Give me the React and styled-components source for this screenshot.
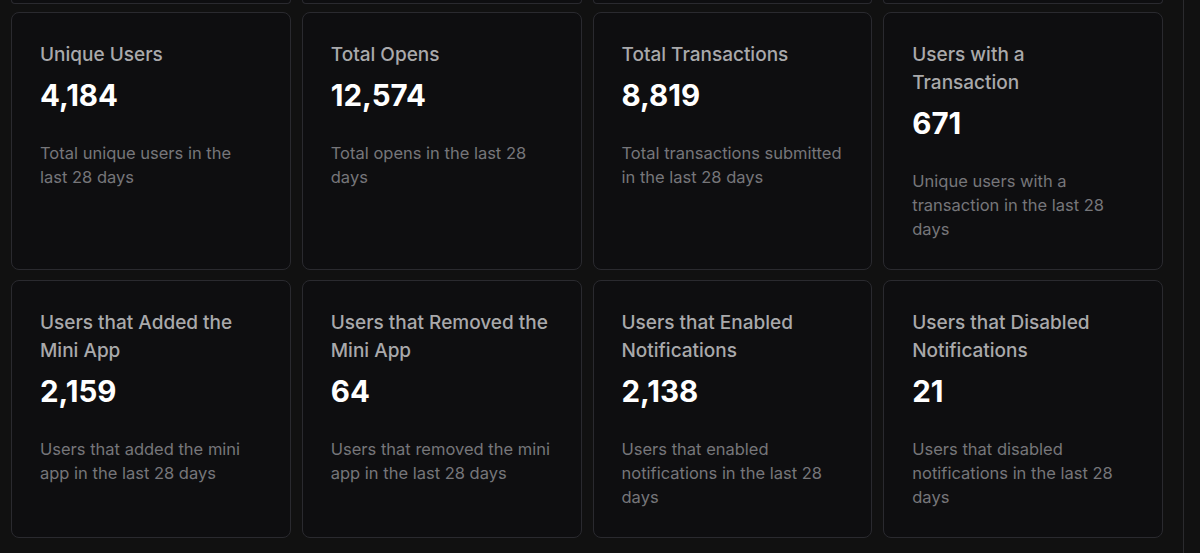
import styled, { createGlobalStyle } from "styled-components";

const stats = [
  {
    title: "Unique Users",
    value: "4,184",
    text: "Total unique users in the last 28 days",
  },
  {
    title: "Total Opens",
    value: "12,574",
    text: "Total opens in the last 28 days",
  },
  {
    title: "Total Transactions",
    value: "8,819",
    text: "Total transactions submitted in the last 28 days",
  },
  {
    title: "Users with a Transaction",
    value: "671",
    text: "Unique users with a transaction in the last 28 days",
  },
  {
    title: "Users that Added the Mini App",
    value: "2,159",
    text: "Users that added the mini app in the last 28 days",
  },
  {
    title: "Users that Removed the Mini App",
    value: "64",
    text: "Users that removed the mini app in the last 28 days",
  },
  {
    title: "Users that Enabled Notifications",
    value: "2,138",
    text: "Users that enabled notifications in the last 28 days",
  },
  {
    title: "Users that Disabled Notifications",
    value: "21",
    text: "Users that disabled notifications in the last 28 days",
  },
];

export default function App() {
  return (
    <>
      <GlobalStyle />
      <Page>
        <Main>
          <StubRow>
            {[0, 1, 2, 3].map((i) => (
              <Stub key={i} />
            ))}
          </StubRow>
          <Grid>
            {stats.map((s) => (
              <Card key={s.title}>
                <Title>{s.title}</Title>
                <Value>{s.value}</Value>
                <Description>{s.text}</Description>
              </Card>
            ))}
          </Grid>
        </Main>
      </Page>
    </>
  );
}

const GlobalStyle = createGlobalStyle`
  html, body {
    margin: 0;
    background: #111111;
    font-family: Inter, "Noto Sans", sans-serif;
  }
`;

const Page = styled.div`
  min-height: 553px;
  background: #111111;
  display: flex;
`;

const Main = styled.div`
  width: 1184px;
  border-right: 1px solid #2b2b2e;
  padding: 0 20px 0 11px;
  box-sizing: border-box;
`;

const StubRow = styled.div`
  display: grid;
  grid-template-columns: repeat(4, 1fr);
  gap: 11px;
  margin-bottom: 8px;
`;

const Stub = styled.div`
  height: 3px;
  border: 1px solid #2a2a2f;
  border-top: none;
  border-radius: 0 0 8px 8px;
  background: #0e0e10;
`;

const Grid = styled.div`
  display: grid;
  grid-template-columns: repeat(4, 1fr);
  gap: 10px 11px;
`;

const Card = styled.div`
  background: #0e0e10;
  border: 1px solid #2a2a2f;
  border-radius: 8px;
  padding: 28px 28px 28px 28px;
  display: flex;
  flex-direction: column;
`;

const Title = styled.div`
  color: #a9a9ab;
  font-size: 19px;
  font-weight: 500;
  line-height: 28px;
`;

const Value = styled.div`
  color: #ffffff;
  font-size: 29.5px;
  font-weight: 700;
  line-height: 36px;
  margin-top: 8px;
  margin-bottom: 28px;
`;

const Description = styled.div`
  color: #76767a;
  font-size: 16.5px;
  line-height: 24px;
`;
